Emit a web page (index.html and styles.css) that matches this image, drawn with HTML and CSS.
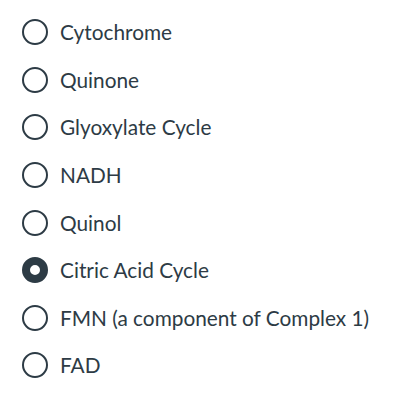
FILE: index.html
```html
<!DOCTYPE html>
<html>
<head>
<meta charset="utf-8">
<link rel="stylesheet" href="styles.css">
</head>
<body>
<div class="options">
  <div class="option"><span class="radio"></span><span class="label">Cytochrome</span></div>
  <div class="option"><span class="radio"></span><span class="label">Quinone</span></div>
  <div class="option"><span class="radio"></span><span class="label">Glyoxylate Cycle</span></div>
  <div class="option"><span class="radio"></span><span class="label">NADH</span></div>
  <div class="option"><span class="radio"></span><span class="label">Quinol</span></div>
  <div class="option"><span class="radio checked"></span><span class="label">Citric Acid Cycle</span></div>
  <div class="option"><span class="radio"></span><span class="label">FMN (a component of Complex 1)</span></div>
  <div class="option"><span class="radio"></span><span class="label">FAD</span></div>
</div>
</body>
</html>
```
FILE: styles.css
```css
html, body {
  margin: 0;
  padding: 0;
  background: #ffffff;
}
body {
  font-family: Lato, "Open Sans", sans-serif;
  color: #2d3b45;
}
.options {
  padding-top: 8.5px;
  padding-left: 22px;
  display: flex;
  flex-direction: column;
}
.option {
  height: 47.6px;
  display: flex;
  align-items: center;
  gap: 12px;
}
.radio {
  box-sizing: border-box;
  width: 26px;
  height: 26px;
  border: 2px solid #2d3b45;
  border-radius: 50%;
  flex: none;
}
.radio.checked {
  border-width: 8.5px;
}
.label {
  font-size: 20.8px;
  line-height: 24px;
}
```
